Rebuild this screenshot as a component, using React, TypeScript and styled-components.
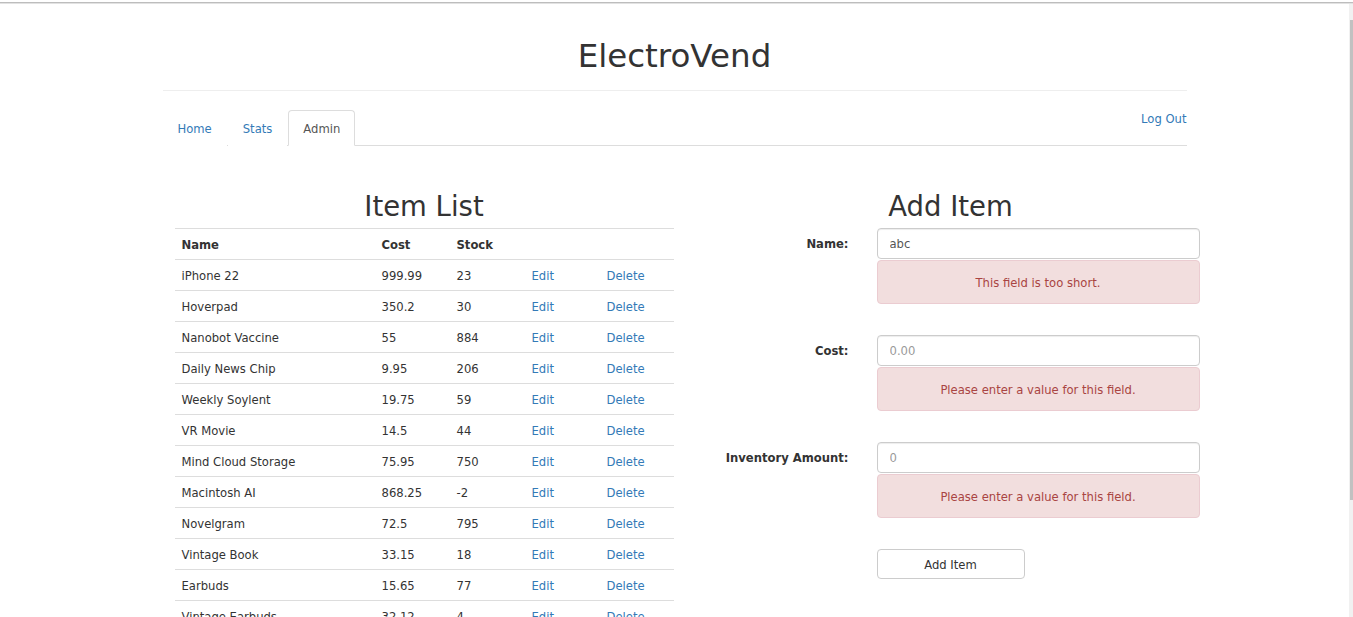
import React from "react";
import styled, { createGlobalStyle } from "styled-components";

const GlobalStyle = createGlobalStyle`
  html, body { margin: 0; padding: 0; background: #fff; }
  body {
    font-family: "DejaVu Sans", Verdana, sans-serif;
    font-size: 11.6px;
    color: #333;
  }
  * { box-sizing: border-box; }
`;

const Page = styled.div`
  height: 100vh;
  display: flex;
  flex-direction: column;
  padding-top: 2px;
  overflow: hidden;
`;

const TopEdge = styled.div`
  height: 2px;
  background: #bdbdbd;
  border-bottom: 1px solid #e2e2e2;
  flex: none;
`;

const Body = styled.div`
  flex: 1;
  min-height: 0;
  display: flex;
`;

const Main = styled.main`
  flex: 1;
  overflow: hidden;
`;

const ScrollRail = styled.div`
  width: 4px;
  flex: none;
  background: #f1f1f1;
  padding-top: 16px;
  padding-left: 1px;
`;

const Thumb = styled.div`
  height: 480px;
  background: #c1c1c1;
`;

const Container = styled.div`
  width: 1024px;
  margin: 0 auto;
`;

const Header = styled.header`
  padding: 34px 0 16px;
  border-bottom: 1px solid #eee;
`;

const Title = styled.h1`
  margin: 0;
  text-align: center;
  font-size: 32.5px;
  line-height: 36px;
  font-weight: normal;
  color: #333;
`;

const NavBar = styled.nav`
  margin-top: 19px;
  display: flex;
  justify-content: space-between;
  align-items: flex-end;
  border-bottom: 1px solid #ddd;
`;

const Tabs = styled.ul`
  list-style: none;
  margin: 0;
  padding: 0;
  display: flex;
`;

const Tab = styled.li<{ $active?: boolean }>`
  margin: 0 1px -1px 0;
  padding: 11px 14px 8px;
  line-height: 15px;
  border: 1px solid ${(p) => (p.$active ? "#ddd" : "transparent")};
  border-bottom-color: ${(p) => (p.$active ? "#fff" : "transparent")};
  border-radius: 4px 4px 0 0;
  background: #fff;
  color: ${(p) => (p.$active ? "#555" : "#337ab7")};
  cursor: pointer;
`;

const LogOut = styled.a`
  align-self: flex-start;
  padding-top: 2px;
  line-height: 15px;
  color: #337ab7;
  text-decoration: none;
  cursor: pointer;
`;

const Content = styled.div`
  display: grid;
  grid-template-columns: 499px 498px;
  column-gap: 28px;
  margin-left: 12px;
  margin-top: 44px;
`;

const Column = styled.section``;

const Heading = styled.h2`
  margin: 0 0 7px;
  padding-top: 1px;
  text-align: center;
  font-size: 27.5px;
  line-height: 30px;
  font-weight: normal;
  color: #333;
`;

const Table = styled.table`
  width: 100%;
  border-collapse: collapse;
  table-layout: fixed;
`;

const Th = styled.th<{ $w?: number }>`
  width: ${(p) => (p.$w ? `${p.$w}px` : "auto")};
  text-align: left;
  font-weight: bold;
  height: 31px;
  padding: 2px 7px 0;
  border-top: 1px solid #ddd;
`;

const Td = styled.td`
  height: 31px;
  padding: 2px 7px 0;
  border-top: 1px solid #ddd;
  white-space: nowrap;
`;

const Link = styled.a`
  color: #337ab7;
  text-decoration: none;
  cursor: pointer;
`;

const Form = styled.form`
  display: grid;
  grid-template-columns: 147px 1fr;
  column-gap: 28px;
  row-gap: 31px;
`;

const Label = styled.label`
  font-weight: bold;
  text-align: right;
  padding-top: 1px;
  line-height: 31px;
`;

const Field = styled.div`
  display: flex;
  flex-direction: column;
  gap: 1px;
`;

const Input = styled.input`
  height: 31px;
  width: 100%;
  padding: 1px 11px 0 12px;
  border: 1px solid #ccc;
  border-radius: 4px;
  font-family: inherit;
  font-size: 11.6px;
  color: #555;
  box-shadow: inset 0 1px 1px rgba(0, 0, 0, 0.075);
  outline: none;
  &::placeholder { color: #999; }
`;

const ErrorBox = styled.div`
  height: 44px;
  padding-top: 2px;
  display: flex;
  align-items: center;
  justify-content: center;
  background: #f2dede;
  border: 1px solid #ebccd1;
  border-radius: 4px;
  color: #a94442;
`;

const Button = styled.button`
  grid-column: 2;
  width: 148px;
  height: 30px;
  padding-top: 2px;
  background: #fff;
  border: 1px solid #ccc;
  border-radius: 4px;
  font-family: inherit;
  font-size: 11.6px;
  color: #333;
  cursor: pointer;
`;

const items: [string, string, string][] = [
  ["iPhone 22", "999.99", "23"],
  ["Hoverpad", "350.2", "30"],
  ["Nanobot Vaccine", "55", "884"],
  ["Daily News Chip", "9.95", "206"],
  ["Weekly Soylent", "19.75", "59"],
  ["VR Movie", "14.5", "44"],
  ["Mind Cloud Storage", "75.95", "750"],
  ["Macintosh AI", "868.25", "-2"],
  ["Novelgram", "72.5", "795"],
  ["Vintage Book", "33.15", "18"],
  ["Earbuds", "15.65", "77"],
  ["Vintage Earbuds", "32.12", "4"],
  ["Smart Watch", "120", "12"],
];

const fields = [
  { label: "Name:", value: "abc", placeholder: "", error: "This field is too short." },
  { label: "Cost:", value: "", placeholder: "0.00", error: "Please enter a value for this field." },
  { label: "Inventory Amount:", value: "", placeholder: "0", error: "Please enter a value for this field." },
];

export default function App() {
  return (
    <>
      <GlobalStyle />
      <Page>
        <TopEdge />
        <Body>
          <Main>
            <Container>
              <Header>
                <Title>ElectroVend</Title>
              </Header>
              <NavBar>
                <Tabs>
                  <Tab>Home</Tab>
                  <Tab>Stats</Tab>
                  <Tab $active>Admin</Tab>
                </Tabs>
                <LogOut>Log Out</LogOut>
              </NavBar>
              <Content>
                <Column>
                  <Heading>Item List</Heading>
                  <Table>
                    <thead>
                      <tr>
                        <Th $w={200}>Name</Th>
                        <Th $w={75}>Cost</Th>
                        <Th $w={75}>Stock</Th>
                        <Th $w={75}></Th>
                        <Th></Th>
                      </tr>
                    </thead>
                    <tbody>
                      {items.map(([name, cost, stock]) => (
                        <tr key={name}>
                          <Td>{name}</Td>
                          <Td>{cost}</Td>
                          <Td>{stock}</Td>
                          <Td><Link>Edit</Link></Td>
                          <Td><Link>Delete</Link></Td>
                        </tr>
                      ))}
                    </tbody>
                  </Table>
                </Column>
                <Column>
                  <Heading>Add Item</Heading>
                  <Form onSubmit={(e) => e.preventDefault()}>
                    {fields.map((f) => (
                      <React.Fragment key={f.label}>
                        <Label>{f.label}</Label>
                        <Field>
                          <Input defaultValue={f.value} placeholder={f.placeholder} />
                          <ErrorBox>{f.error}</ErrorBox>
                        </Field>
                      </React.Fragment>
                    ))}
                    <Button type="submit">Add Item</Button>
                  </Form>
                </Column>
              </Content>
            </Container>
          </Main>
          <ScrollRail>
            <Thumb />
          </ScrollRail>
        </Body>
      </Page>
    </>
  );
}
